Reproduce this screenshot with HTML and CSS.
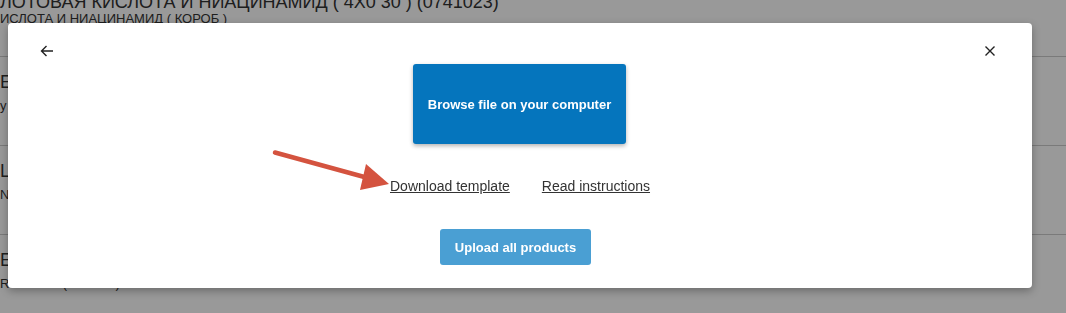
FILE: index.html
```html
<!DOCTYPE html>
<html lang="en">
<head>
    <meta charset="UTF-8">
    <meta name="viewport" content="width=device-width, initial-scale=1.0">
    <title>Upload products</title>
    <link rel="stylesheet" href="styles.css">
</head>
<body>
    <div id="product-list">
        <div class="row row-first">
            <div class="row-title">ЛОТОВАЯ КИСЛОТА И НИАЦИНАМИД ( 4X0 30 ) (0741023)</div>
            <div class="row-sub">ИСЛОТА И НИАЦИНАМИД ( КОРОБ )</div>
        </div>
        <div class="row">
            <div class="row-title">E</div>
            <div class="row-sub">у</div>
        </div>
        <div class="row">
            <div class="row-title">L</div>
            <div class="row-sub">N</div>
        </div>
        <div class="row">
            <div class="row-title">E</div>
            <div class="row-sub">RU.IO.NO ( 4X0 30 )</div>
        </div>
    </div>

    <div id="backdrop"></div>

    <div id="upload-modal">
        <div class="modal-header">
            <button class="icon-btn" aria-label="Back">
                <svg width="16" height="16" viewBox="0 0 16 16"><path d="M14 8H2.5M7.5 3L2.5 8l5 5" fill="none" stroke="#222" stroke-width="1.4"/></svg>
            </button>
            <button class="icon-btn" aria-label="Close">
                <svg width="16" height="16" viewBox="0 0 16 16"><path d="M3.5 3.5l9 9M12.5 3.5l-9 9" fill="none" stroke="#222" stroke-width="1.4"/></svg>
            </button>
        </div>
        <div class="modal-body">
            <button id="browse-btn">Browse file on your computer</button>
            <div class="modal-links">
                <a href="#">Download template</a>
                <a href="#">Read instructions</a>
            </div>
            <button id="upload-btn">Upload all products</button>
        </div>
    </div>

    <svg id="pointer-arrow" width="1066" height="313" viewBox="0 0 1066 313">
        <path d="M275 152.5L368 178" stroke="#d4533f" stroke-width="4.5" stroke-linecap="round"/>
        <polygon points="366,164 360,190 389,184" fill="#d4533f"/>
    </svg>
</body>
</html>
```

FILE: styles.css
```css
body {
    margin: 0;
    font-family: "Liberation Sans", Arial, sans-serif;
    background-color: #fff;
    overflow: hidden;
}

#product-list {
    margin-top: -14px;
    color: #333;
}

.row {
    height: 89px;
    padding-top: 15px;
    box-sizing: border-box;
    border-bottom: 1px solid #ccc;
    white-space: nowrap;
}

.row-first {
    height: 71px;
    padding-top: 6px;
}

.row-title {
    font-size: 18px;
    line-height: 20px;
}

.row-sub {
    font-size: 13px;
    line-height: 20px;
    margin-top: 4px;
}

.row-first .row-sub {
    margin-top: -3px;
}

#backdrop {
    position: fixed;
    inset: 0;
    background-color: rgba(0, 0, 0, 0.4);
}

#upload-modal {
    position: fixed;
    left: 8px;
    top: 23px;
    width: 1024px;
    height: 265px;
    background-color: #fff;
    border-radius: 4px;
    box-shadow: 0 3px 8px rgba(0, 0, 0, 0.3);
    display: flex;
    flex-direction: column;
}

.modal-header {
    display: flex;
    justify-content: space-between;
    padding: 20px 34px 0 31px;
    height: 16px;
}

.icon-btn {
    width: 16px;
    height: 16px;
    padding: 0;
    border: none;
    background: none;
    display: flex;
}

.modal-body {
    display: flex;
    flex-direction: column;
    align-items: center;
    padding-top: 5px;
}

#browse-btn {
    width: 213px;
    height: 80px;
    margin-left: -1px;
    border: none;
    border-radius: 3px;
    background-color: #0575bd;
    color: #fff;
    font-family: "Liberation Sans", Arial, sans-serif;
    font-size: 13px;
    font-weight: bold;
    box-shadow: 0 2px 4px rgba(0, 0, 0, 0.3);
}

.modal-links {
    display: flex;
    gap: 32px;
    margin-top: 34px;
    line-height: 16px;
}

.modal-links a {
    color: #333;
    font-size: 14px;
    text-decoration: underline;
}

#upload-btn {
    width: 151px;
    height: 36px;
    margin-top: 35px;
    margin-left: -9px;
    border: none;
    border-radius: 3px;
    background-color: #4a9fd3;
    color: #fff;
    font-family: "Liberation Sans", Arial, sans-serif;
    font-size: 13px;
    font-weight: bold;
}

#pointer-arrow {
    position: fixed;
    left: 0;
    top: 0;
    pointer-events: none;
}
```
